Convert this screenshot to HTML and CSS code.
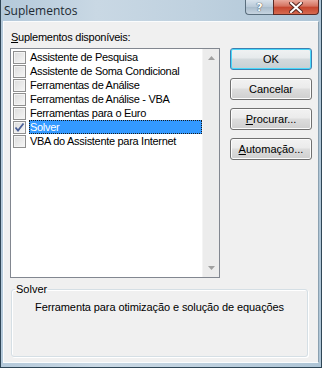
FILE: index.html
```html
<!DOCTYPE html>
<html lang="pt">
<head>
<meta charset="utf-8">
<title>Suplementos</title>
<link rel="stylesheet" href="styles.css">
</head>
<body>
<div class="window">
  <div class="titlebar">
    <span class="title">Suplementos</span>
    <div class="caption-buttons">
      <span class="cap-btn help">?</span>
      <span class="cap-btn close">
        <svg width="14" height="11" viewBox="0 0 14 11"><path d="M2 1 L12 10 M12 1 L2 10" stroke="#5a2a24" stroke-width="4" stroke-linecap="square"/><path d="M2 1 L12 10 M12 1 L2 10" stroke="#fff" stroke-width="2" stroke-linecap="square"/></svg>
      </span>
    </div>
  </div>
  <div class="client">
    <div class="main">
      <div class="left">
        <div class="label"><u>S</u>uplementos disponíveis:</div>
        <div class="listbox">
          <ul class="items">
            <li class="item"><span class="check"></span><span class="text">Assistente de Pesquisa</span></li>
            <li class="item"><span class="check"></span><span class="text">Assistente de Soma Condicional</span></li>
            <li class="item"><span class="check"></span><span class="text">Ferramentas de Análise</span></li>
            <li class="item"><span class="check"></span><span class="text">Ferramentas de Análise - VBA</span></li>
            <li class="item"><span class="check"></span><span class="text">Ferramentas para o Euro</span></li>
            <li class="item selected"><span class="check checked"><svg width="11" height="11" viewBox="0 0 11 11"><path d="M1.5 5.5 L4 8.5 L9.5 1.5" fill="none" stroke="#4a5f97" stroke-width="1.8"/></svg></span><span class="text">Solver</span></li>
            <li class="item"><span class="check"></span><span class="text">VBA do Assistente para Internet</span></li>
          </ul>
          <div class="scrollbar">
            <svg width="7" height="4" viewBox="0 0 7 4"><path d="M3.5 0 L7 4 L0 4 Z" fill="#a0a0a0"/></svg>
            <svg width="7" height="4" viewBox="0 0 7 4"><path d="M0 0 L7 0 L3.5 4 Z" fill="#a0a0a0"/></svg>
          </div>
        </div>
      </div>
      <div class="buttons">
        <button class="btn default">OK</button>
        <button class="btn">Cancelar</button>
        <button class="btn"><u>P</u>rocurar...</button>
        <button class="btn"><u>A</u>utomação...</button>
      </div>
    </div>
    <fieldset class="group">
      <legend>Solver</legend>
      <p class="desc">Ferramenta para otimização e solução de equações</p>
    </fieldset>
  </div>
</div>
</body>
</html>
```
FILE: styles.css
```css
* { box-sizing: border-box; }
html, body { margin: 0; padding: 0; }
body {
  width: 322px;
  height: 368px;
  overflow: hidden;
  background: #bccfdd;
  font-family: "Liberation Sans", Arial, sans-serif;
}
.window {
  width: 322px;
  height: 368px;
  display: flex;
  flex-direction: column;
  border: 1px solid #2f4656;
  border-top: none;
  background: linear-gradient(90deg, #b4c9da 0%, #c9d8e4 30%, #bfd1df 60%, #aec5d6 100%);
}
.titlebar {
  height: 21px;
  display: flex;
  align-items: flex-start;
  padding-left: 3px;
  flex: none;
}
.title {
  font-family: "Open Sans", "Liberation Sans", sans-serif;
  font-size: 12px;
  color: #1d2a33;
  line-height: 21px;
}
.caption-buttons {
  margin-left: auto;
  margin-right: 2px;
  display: flex;
}
.cap-btn {
  height: 15px;
  display: flex;
  align-items: center;
  justify-content: center;
  border: 1px solid #5a6e7d;
  border-top: none;
}
.help {
  width: 28px;
  border-radius: 0 0 0 4px;
  border-right: none;
  background: linear-gradient(#d7e2ec, #b8c9d7 50%, #a9bccb 51%, #c6d4e0);
  color: #fff;
  font-family: "DejaVu Sans", sans-serif;
  font-weight: bold;
  font-size: 11px;
  text-shadow: 0 0 1px #3a4a56, 0 0 1px #3a4a56;
}
.close {
  width: 46px;
  border-radius: 0 0 4px 0;
  border-color: #5b2b26;
  background: linear-gradient(#e9a99c, #d4715e 45%, #c5442d 50%, #d66a4f 100%);
}
.client {
  flex: 1;
  margin: 0 2px 4px 2px;
  border: 1px solid #fafcfd;
  border-right-color: #8aa0b0;
  background: #f0f0f0;
  padding: 9px 6px 5px 6px;
  display: flex;
  flex-direction: column;
}
.main {
  display: flex;
}
.left {
  width: 210px;
  display: flex;
  flex-direction: column;
}
.label {
  font-size: 11px;
  line-height: 13px;
  color: #000;
  margin-bottom: 4px;
  padding-left: 1px;
  white-space: nowrap;
  letter-spacing: -0.25px;
}
.listbox {
  height: 230px;
  border: 1px solid #828790;
  background: #fff;
  display: flex;
}
.items {
  list-style: none;
  margin: 0;
  padding: 1px 0 0 2px;
  flex: 1;
  min-width: 0;
}
.item {
  display: flex;
  align-items: center;
  height: 14px;
  font-size: 11px;
  color: #000;
  white-space: nowrap;
  letter-spacing: -0.3px;
}
.check {
  width: 13px;
  height: 13px;
  border: 1px solid #8f8f8f;
  background: linear-gradient(135deg, #dcdcdc, #f6f6f6);
  box-shadow: inset 0 0 0 1px #f4f4f4;
  margin-right: 3px;
  flex: none;
  display: flex;
  align-items: center;
  justify-content: center;
}
.text {
  line-height: 14px;
  padding: 0 2px 0 1px;
}
.selected .text {
  flex: 1;
  background: #3399ff;
  color: #fff;
  outline: 1px dotted #1a1a1a;
  outline-offset: -1px;
  height: 14px;
}
.scrollbar {
  width: 17px;
  flex: none;
  background: #ececec;
  border-left: 1px solid #f4f4f4;
  display: flex;
  flex-direction: column;
  justify-content: space-between;
  align-items: center;
  padding: 7px 0 7px;
}
.buttons {
  display: flex;
  flex-direction: column;
  gap: 8px;
  margin-left: 10px;
  padding-top: 17px;
}
.btn {
  width: 82px;
  height: 22px;
  border: 1px solid #707070;
  border-radius: 3px;
  background: linear-gradient(#f2f2f2 0%, #ebebeb 45%, #dddddd 50%, #cfcfcf 100%);
  box-shadow: inset 0 0 0 1px #fcfcfc;
  font-family: "Liberation Sans", Arial, sans-serif;
  font-size: 11px;
  color: #000;
  padding: 0;
}
.btn.default {
  border-color: #3c7fb1;
  box-shadow: inset 0 0 0 1px #48d8fb;
  background: linear-gradient(#f0f2f3 0%, #e6eaec 45%, #d4dadd 50%, #c6d0d4 100%);
}
.group {
  margin: 5px 4px 0 1px;
  flex: 1;
  border: 1px solid #d5dfe5;
  border-radius: 3px;
  box-shadow: inset 1px 1px 0 #fff, 1px 1px 0 #fff;
  padding: 0;
  min-width: 0;
}
.group legend {
  font-size: 11px;
  padding: 0 1px 0 1px;
  margin-left: 3px;
  color: #000;
  line-height: 12px;
}
.desc {
  margin: 6px 0 0 0;
  text-align: center;
  font-family: "Liberation Sans", sans-serif;
  font-size: 11px;
  letter-spacing: -0.1px;
  color: #000;
}
```
